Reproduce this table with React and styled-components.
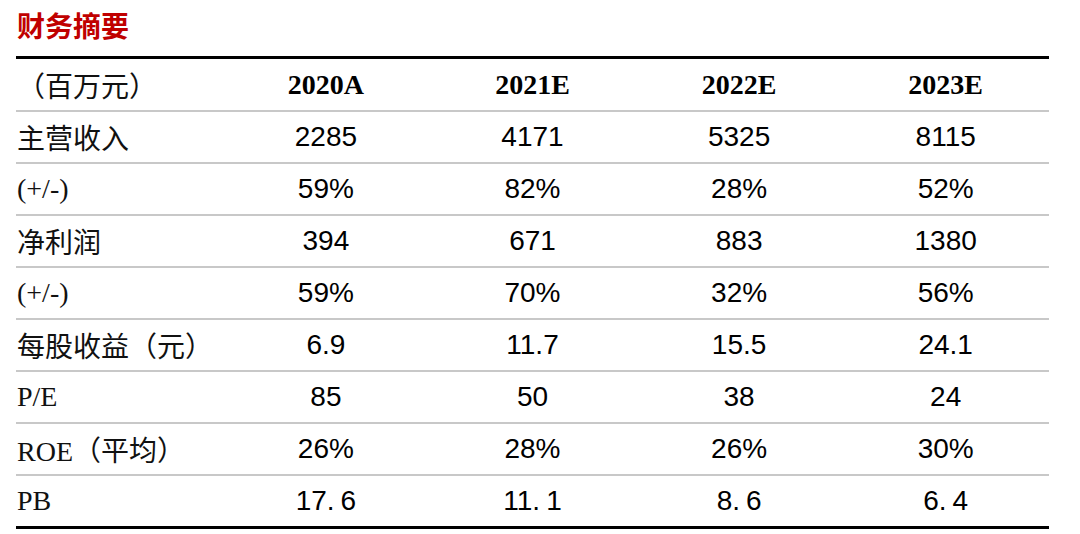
import React from "react";
import styled, { createGlobalStyle } from "styled-components";

const Global = createGlobalStyle`
  html, body { margin: 0; padding: 0; background: #fff; }
  body { width: 1080px; height: 534px; overflow: hidden; }
`;

const Page = styled.div`
  width: 1080px;
  height: 534px;
  padding: 0 31px 0 16px;
  box-sizing: border-box;
  display: flex;
  flex-direction: column;
`;

const Title = styled.h1`
  margin: 0;
  height: 56px;
  box-sizing: border-box;
  padding: 9px 0 0 1px;
  font-family: "Noto Sans CJK SC", "Liberation Sans", sans-serif;
  font-weight: 700;
  font-size: 28px;
  line-height: 32px;
  color: #c00000;
`;

const Table = styled.div`
  border-top: 3px solid #000;
  display: flex;
  flex-direction: column;
`;

const Row = styled.div`
  display: grid;
  grid-template-columns: repeat(5, 1fr);
  align-items: center;
  height: ${(p) => (p.$head ? 51 : 50)}px;
  border-bottom: ${(p) => (p.$last ? "3px solid #000" : "2px solid #c8c8c8")};
`;

const Label = styled.div`
  padding-left: 1px;
  font-family: "Liberation Serif", "Noto Sans CJK SC", serif;
  font-size: 28px;
  color: #111;
  white-space: nowrap;
`;

const HeadCell = styled.div`
  text-align: center;
  font-family: "Liberation Serif", serif;
  font-weight: 700;
  font-size: 28px;
  color: #000;
`;

const Cell = styled.div`
  text-align: center;
  font-family: "Liberation Sans", Arial, sans-serif;
  font-size: 28px;
  color: #000;
`;

const WideDot = styled.span`
  margin-right: 6px;
`;

const years = ["2020A", "2021E", "2022E", "2023E"];

const wide = (v) => {
  const [a, b] = v.split(".");
  return (
    <>
      {a}
      <WideDot>.</WideDot>
      {b}
    </>
  );
};

const rows = [
  ["主营收入", ["2285", "4171", "5325", "8115"]],
  ["(+/-)", ["59%", "82%", "28%", "52%"]],
  ["净利润", ["394", "671", "883", "1380"]],
  ["(+/-)", ["59%", "70%", "32%", "56%"]],
  ["每股收益（元）", ["6.9", "11.7", "15.5", "24.1"]],
  ["P/E", ["85", "50", "38", "24"]],
  ["ROE（平均）", ["26%", "28%", "26%", "30%"]],
  ["PB", ["17.6", "11.1", "8.6", "6.4"], true],
];

export default function App() {
  return (
    <>
      <Global />
      <Page>
        <Title>财务摘要</Title>
        <Table>
          <Row $head>
            <Label>（百万元）</Label>
            {years.map((y) => (
              <HeadCell key={y}>{y}</HeadCell>
            ))}
          </Row>
          {rows.map(([label, vals, isWide], i) => (
            <Row key={i} $last={i === rows.length - 1}>
              <Label>{label}</Label>
              {vals.map((v, j) => (
                <Cell key={j}>{isWide ? wide(v) : v}</Cell>
              ))}
            </Row>
          ))}
        </Table>
      </Page>
    </>
  );
}
